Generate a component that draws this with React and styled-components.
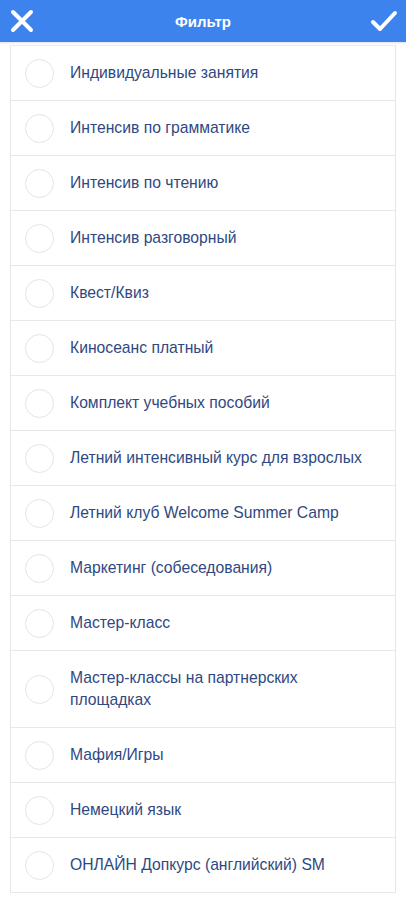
import React from 'react';
import styled, { createGlobalStyle } from 'styled-components';

const items = [
  'Индивидуальные занятия',
  'Интенсив по грамматике',
  'Интенсив по чтению',
  'Интенсив разговорный',
  'Квест/Квиз',
  'Киносеанс платный',
  'Комплект учебных пособий',
  'Летний интенсивный курс для взрослых',
  'Летний клуб Welcome Summer Camp',
  'Маркетинг (собеседования)',
  'Мастер-класс',
  'Мастер-классы на партнерских площадках',
  'Мафия/Игры',
  'Немецкий язык',
  'ОНЛАЙН Допкурс (английский) SM',
];

const GlobalStyle = createGlobalStyle`
  body {
    margin: 0;
    background: #ffffff;
    font-family: "Liberation Sans", Arial, sans-serif;
  }
`;

const Page = styled.div`
  width: 406px;
  height: 900px;
  overflow: hidden;
  background: #ffffff;
`;

const Header = styled.header`
  height: 42px;
  background: #3c83ee;
  display: flex;
  align-items: center;
  justify-content: space-between;
  padding: 0 8px 0 8px;
  box-shadow: 0 1px 2px rgba(0, 0, 0, 0.12);
`;

const Title = styled.div`
  color: #ffffff;
  font-size: 15px;
  font-weight: 700;
`;

const IconButton = styled.div`
  width: 28px;
  height: 28px;
  display: flex;
  align-items: center;
  justify-content: center;
`;

const List = styled.ul`
  list-style: none;
  margin: 3px 10px 0;
  padding: 0;
  border-left: 1px solid #e6e6e6;
  border-right: 1px solid #e6e6e6;
`;

const Row = styled.li`
  display: flex;
  align-items: center;
  min-height: 55px;
  padding: 0 0 0 14px;
  border-bottom: 1px solid #e8e8e8;
  box-sizing: border-box;
  &:first-child {
    border-top: 1px solid #ececec;
  }
`;

const Radio = styled.span`
  flex: none;
  width: 27px;
  height: 27px;
  border-radius: 50%;
  border: 1px solid #e4e4e4;
  margin-right: 16px;
`;

const Label = styled.span`
  color: #2f4882;
  font-size: 15.7px;
  line-height: 22px;
  padding: 16px 26px 16px 0;
`;

export default function App() {
  return (
    <Page>
      <GlobalStyle />
      <Header>
        <IconButton>
          <svg width="24" height="24" viewBox="0 0 24 24">
            <path d="M3 3L21 21M21 3L3 21" stroke="#fff" strokeWidth="4" strokeLinecap="round" />
          </svg>
        </IconButton>
        <Title>Фильтр</Title>
        <IconButton>
          <svg width="28" height="24" viewBox="0 0 28 24">
            <path d="M3 13L10 20L25 4" stroke="#fff" strokeWidth="4" fill="none" strokeLinecap="round" strokeLinejoin="round" />
          </svg>
        </IconButton>
      </Header>
      <List>
        {items.map((t) => (
          <Row key={t}>
            <Radio />
            <Label>{t}</Label>
          </Row>
        ))}
      </List>
    </Page>
  );
}
